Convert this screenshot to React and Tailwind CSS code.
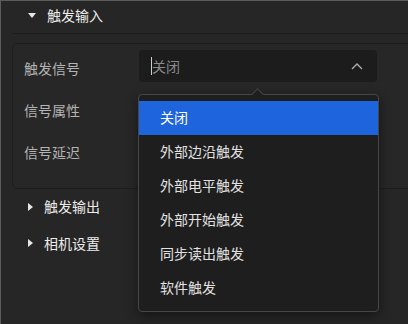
import { useState } from 'react';

const OPTIONS = ['关闭', '外部边沿触发', '外部电平触发', '外部开始触发', '同步读出触发', '软件触发'];

function Caret({ open }) {
  return open ? (
    <svg width="8" height="5" viewBox="0 0 8 5" className="shrink-0">
      <path d="M0 0h8L4 5z" fill="#e6e6e6" />
    </svg>
  ) : (
    <svg width="5" height="8" viewBox="0 0 5 8" className="shrink-0">
      <path d="M0 0v8l5-4z" fill="#e6e6e6" />
    </svg>
  );
}

function SectionHeader({ title, open, className = '' }) {
  return (
    <div className={`flex items-center pl-[27px] gap-[11px] text-[14px] text-[#ececec] ${className}`}>
      <Caret open={open} />
      <span>{title}</span>
    </div>
  );
}

export default function App() {
  const [selected] = useState(0);

  return (
    <div
      className="relative w-[408px] h-[324px] overflow-hidden bg-[#262626] border-l border-t border-[#5c5c5c]"
      style={{ fontFamily: '"Noto Sans CJK SC", "Noto Sans", sans-serif' }}
    >
      {/* Trigger input */}
      <SectionHeader title="触发输入" open className="h-[32px] pb-[4px]" />
      <div className="ml-[11px] border-b border-[#1d1d1d]" />

      <div className="ml-[11px] mr-[-12px] mt-[9px] h-[146px] rounded-md border border-[#1e1e1e] bg-[#272727] pt-[3px] pl-[11px]">
        <div className="flex items-center h-[42px]">
          <span className="w-[115px] text-[14px] text-[#b4b4b4]">触发信号</span>
          <div className="flex items-center w-[238px] h-[32px] mb-[4px] rounded-[4px] bg-[#1c1c1c] pl-[12px] pr-[14px]">
            <span className="w-px h-[18px] bg-[#cfcfcf]" />
            <span className="flex-1 text-[14px] text-[#8a8a8a]">关闭</span>
            <svg width="12" height="7" viewBox="0 0 12 7">
              <path d="M1 6l5-5 5 5" fill="none" stroke="#b0b0b0" strokeWidth="1.3" />
            </svg>
          </div>
        </div>
        <div className="flex items-center h-[42px]">
          <span className="text-[14px] text-[#b4b4b4]">信号属性</span>
        </div>
        <div className="flex items-center h-[42px]">
          <span className="text-[14px] text-[#b4b4b4]">信号延迟</span>
        </div>
      </div>

      <SectionHeader title="触发输出" className="h-[35px]" />
      <SectionHeader title="相机设置" className="h-[38px]" />

      {/* Dropdown menu */}
      <div className="absolute left-[137px] top-[93px] w-[241px] h-[218px] rounded-[4px] border border-[#474747] bg-[#1e1e1e] pt-[6px] shadow-[0_4px_12px_rgba(0,0,0,0.45)]">
        <div className="absolute left-[114px] top-[-5px] w-[9px] h-[9px] rotate-45 border-l border-t border-[#474747] bg-[#1e1e1e]" />
        {OPTIONS.map((opt, i) => (
          <div
            key={opt}
            className={`relative flex items-center h-[34px] pl-[21px] pb-[1px] text-[14px] ${
              i === selected ? 'bg-[#1e64dc] text-white' : 'text-[#e2e2e2]'
            }`}
          >
            {opt}
          </div>
        ))}
      </div>
    </div>
  );
}
